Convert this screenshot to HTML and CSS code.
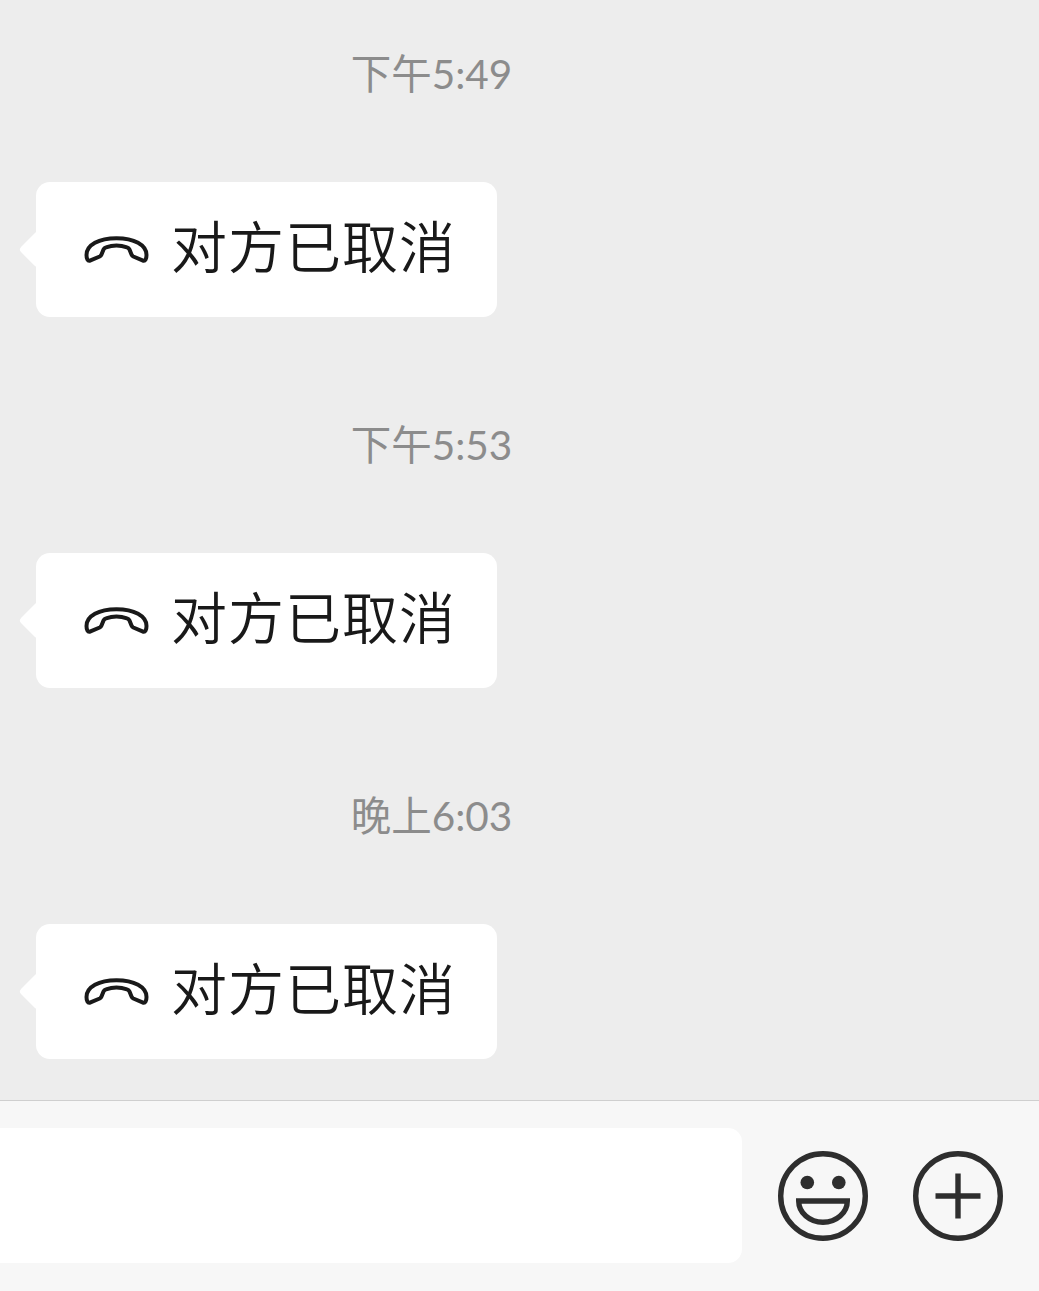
FILE: index.html
```html
<!DOCTYPE html>
<html lang="zh-CN">
<head>
    <meta charset="UTF-8">
    <meta name="viewport" content="width=device-width, initial-scale=1.0">
    <title>聊天</title>
    <link rel="stylesheet" href="styles.css">
</head>
<body>
    <!-- Shared call icon -->
    <svg class="icon-defs" width="0" height="0">
        <symbol id="hangup" viewBox="0 0 66 30">
            <path d="M2.500 20C2.500 10 15 3.200 32.500 3.200S62.500 10 62.500 20C62.500 22 62.300 23.300 61.600 24.500C60.900 25.700 59.800 26 58.500 25.400L49.300 21.500C48.300 21 47.900 20.600 47.500 19.600L45.500 14.500C45 13.200 44.300 12.700 43 12.300C36.500 10.100 28.500 10.100 22 12.300C20.700 12.700 20 13.200 19.500 14.500L17.500 19.600C17.100 20.600 16.700 21 15.700 21.500L6.500 25.400C5.200 26 4.100 25.700 3.400 24.500C2.700 23.300 2.500 22 2.500 20Z"/>
        </symbol>
    </svg>

    <!-- Messages -->
    <main class="chat">
        <div class="time">下午5:49</div>
        <div class="bubble">
            <svg class="call-icon"><use href="#hangup"/></svg>
            <span class="text">对方已取消</span>
        </div>

        <div class="time">下午5:53</div>
        <div class="bubble">
            <svg class="call-icon"><use href="#hangup"/></svg>
            <span class="text">对方已取消</span>
        </div>

        <div class="time">晚上6:03</div>
        <div class="bubble">
            <svg class="call-icon"><use href="#hangup"/></svg>
            <span class="text">对方已取消</span>
        </div>
    </main>

    <!-- Input bar -->
    <footer class="toolbar">
        <div class="message-input" contenteditable="true"></div>
        <svg class="tool-icon" viewBox="0 0 90 90">
            <circle cx="45" cy="45" r="42.300"/>
            <circle class="eye" cx="29.300" cy="31.500" r="6.800"/>
            <circle class="eye" cx="60.800" cy="31.500" r="6.800"/>
            <path d="M20.700 50H69.300A24.300 21.300 0 0 1 20.700 50Z"/>
        </svg>
        <svg class="tool-icon" viewBox="0 0 90 90">
            <circle cx="45" cy="45" r="42.300"/>
            <path d="M22.500 45H67.500M45 22.500V67.500"/>
        </svg>
    </footer>
</body>
</html>
```

FILE: styles.css
```css
/* General reset */
* {
    margin: 0;
    padding: 0;
    box-sizing: border-box;
}

body {
    font-family: Lato, "Noto Sans CJK SC", sans-serif;
    background-color: #ededed;
    height: 100vh;
    display: flex;
    flex-direction: column;
    overflow: hidden;
}

.icon-defs {
    display: none;
}

/* Message list */
.chat {
    flex: 1;
    min-height: 0;
    display: flex;
    flex-direction: column;
    align-items: flex-start;
    padding-top: 44px;
}

.time {
    flex-shrink: 0;
    width: 863px;
    height: 60px;
    line-height: 60px;
    margin-bottom: 78px;
    text-align: center;
    font-size: 40.500px;
    font-weight: 400;
    color: #8c8c8c;
    white-space: nowrap;
}

/* Call bubble */
.bubble {
    position: relative;
    flex-shrink: 0;
    display: flex;
    align-items: center;
    width: 461px;
    height: 135px;
    margin-left: 36px;
    margin-bottom: 98px;
    padding-left: 48px;
    border-radius: 14px;
    background-color: #fff;
}

.bubble:last-child {
    margin-bottom: 0;
}

/* Tail on the left side */
.bubble::before {
    content: "";
    position: absolute;
    left: -12px;
    top: 54px;
    width: 27px;
    height: 27px;
    border-radius: 4px;
    background-color: #fff;
    transform: rotate(45deg);
}

.call-icon {
    width: 66px;
    height: 30px;
    margin-right: 21px;
    fill: none;
    stroke: #191919;
    stroke-width: 4;
    stroke-linejoin: round;
}

.text {
    padding-bottom: 6px;
    font-size: 56px;
    font-weight: 350;
    letter-spacing: 1px;
    line-height: 80px;
    color: #191919;
    white-space: nowrap;
}

/* Input bar */
.toolbar {
    flex-shrink: 0;
    display: flex;
    align-items: center;
    gap: 45px;
    height: 191px;
    border-top: 1px solid #cfcfcf;
    background-color: #f7f7f7;
}

.message-input {
    width: 742px;
    height: 135px;
    margin-right: -9px;
    margin-bottom: 1px;
    border-radius: 0 14px 14px 0;
    background-color: #fff;
    outline: none;
}

.tool-icon {
    width: 90px;
    height: 90px;
    fill: none;
    stroke: #2e2e2e;
    stroke-width: 5.4;
}

.tool-icon .eye {
    fill: #2e2e2e;
    stroke: none;
}
```
